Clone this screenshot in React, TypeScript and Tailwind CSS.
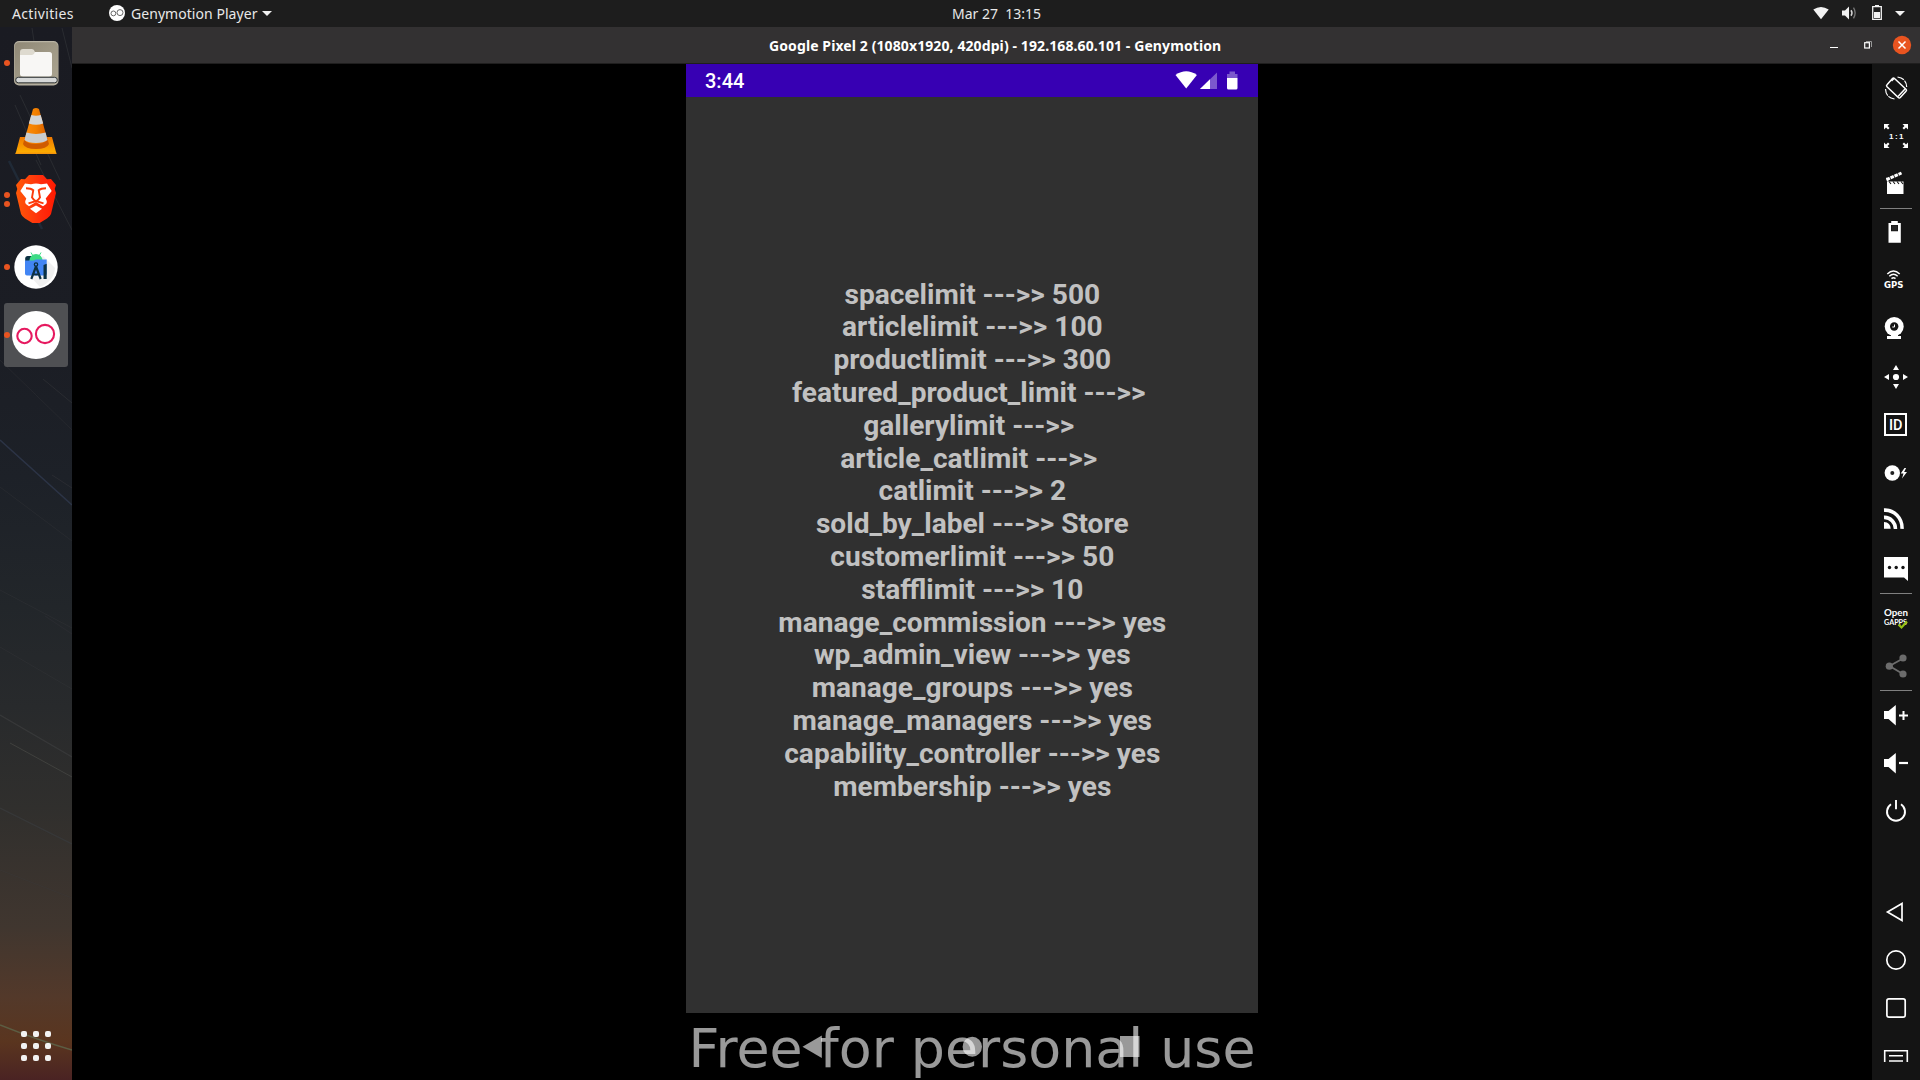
import React from 'react';

const limits: [string, string][] = [
  ['spacelimit', '500'],
  ['articlelimit', '100'],
  ['productlimit', '300'],
  ['featured_product_limit', ''],
  ['gallerylimit', ''],
  ['article_catlimit', ''],
  ['catlimit', '2'],
  ['sold_by_label', 'Store'],
  ['customerlimit', '50'],
  ['stafflimit', '10'],
  ['manage_commission', 'yes'],
  ['wp_admin_view', 'yes'],
  ['manage_groups', 'yes'],
  ['manage_managers', 'yes'],
  ['capability_controller', 'yes'],
  ['membership', 'yes'],
];

function TopBar() {
  return (
    <header className="flex h-[27px] shrink-0 items-center bg-[#1d1d1d] font-['Noto_Sans',sans-serif] text-[14px] leading-[27px] text-[#e8e8e8]">
      <span className="ml-3 w-[97px] tracking-[0.35px]">Activities</span>
      <svg className="h-[27px] w-[22px]" viewBox="109 0 22 27">
        <circle cx="117" cy="13" r="8" fill="#fff" />
        <circle cx="113.4" cy="13.4" r="2.4" fill="none" stroke="#444" strokeWidth="0.8" />
        <circle cx="120" cy="12.6" r="3" fill="none" stroke="#444" strokeWidth="0.8" />
      </svg>
      <span className="w-[131px] tracking-[0.05px]">Genymotion Player</span>
      <svg className="h-[27px] w-[10px]" viewBox="262 0 10 27">
        <path d="M262 11h10l-5 5z" fill="#f0f0f0" />
      </svg>
      <span className="ml-[680px] whitespace-pre tracking-[0px]">Mar 27  13:15</span>
      <svg className="ml-auto h-[27px] w-[120px]" viewBox="1800 0 120 27">
        <path d="M1813.3 9.6q7.7-5 15.4 0L1821 19.3z" fill="#f2f2f2" />
        <path d="M1842 10.5h3l4-4v13l-4-4h-3z" fill="#f2f2f2" />
        <path d="M1851 10.3q2 2.7 0 5.4" fill="none" stroke="#d5d5d5" strokeWidth="1.5" />
        <path d="M1853.5 7.7q3.3 5.3 0 10.6" fill="none" stroke="#777" strokeWidth="1.3" />
        <path d="M1872.7 6.7h8.6v12.6h-8.6z" fill="none" stroke="#f2f2f2" strokeWidth="1.3" />
        <path d="M1875 5h4v2h-4zM1874 12h6v6h-6z" fill="#f2f2f2" />
        <path d="M1895 11h10l-5 5z" fill="#f2f2f2" />
      </svg>
    </header>
  );
}

function TitleBar() {
  return (
    <div className="flex h-[37px] shrink-0 items-center border-b border-[#1f1e1e] bg-[#333132] text-white">
      <span className="ml-[697px] whitespace-nowrap pt-[2px] font-['Noto_Sans',sans-serif] text-[14px] font-bold leading-[34px] tracking-[0.1px]">
        Google Pixel 2 (1080x1920, 420dpi) - 192.168.60.101 - Genymotion
      </span>
      <svg className="ml-auto h-[36px] w-[100px]" viewBox="1820 27 100 36">
        <path d="M1830 47h8v1h-8z" fill="#fff" />
        <path d="M1866 41.5h5.5v5.5" fill="none" stroke="#999" strokeWidth="1" />
        <rect x="1864.7" y="42.7" width="4.7" height="5.3" fill="none" stroke="#fff" strokeWidth="1.2" />
        <circle cx="1902" cy="45" r="9.2" fill="#e95420" />
        <path d="M1898.5 41.5l7 7m0-7l-7 7" stroke="#fff" strokeWidth="1.5" />
      </svg>
    </div>
  );
}

function Slot({ children, dots = 0, active = false }: { children: React.ReactNode; dots?: number; active?: boolean }) {
  return (
    <div className="flex h-[68px] items-center">
      <div className={active ? 'ml-1 flex h-16 w-16 items-center rounded-[3px] bg-[#4f5053]' : 'ml-1 flex h-16 w-16 items-center'}>
        <div className="flex h-full w-[6px] flex-col items-center justify-center gap-[3px]">
          {Array.from({ length: dots }, (_, i) => (
            <span key={i} className="h-[6px] w-[6px] shrink-0 rounded-full bg-[#e95420]" />
          ))}
        </div>
        <svg className="ml-[2px] h-12 w-12" viewBox="0 0 48 48">
          {children}
        </svg>
      </div>
    </div>
  );
}

function Dock() {
  return (
    <aside className="relative flex w-[72px] shrink-0 flex-col bg-[linear-gradient(to_bottom,#1a1b22_0px,#1b1d24_300px,#1d2128_450px,#22262a_580px,#282a2c_680px,#302f2d_780px,#40362f_900px,#53392a_970px,#5a351f_1015px,#4a2323_1053px)]">
      <svg className="absolute inset-0 h-full w-full" viewBox="0 27 72 1053" fill="none">
        <path d="M0 440L72 505" stroke="#2c3446" strokeWidth="1.5" />
        <path d="M43 379L72 403M62 28l10 40M32 28l6 40M15 105l26 60M36 160l36 70M52 475l20 13M45 616l27 18M20 95l40 85" stroke="#2a2c31" />
        <path d="M0 715l72 42M0 808l72 36" stroke="#373839" strokeWidth="1.3" />
        <path d="M10 743L72 777" stroke="#40413e" />
        <path d="M9 161l11 22 22 46" stroke="#26384a" strokeWidth="2.5" opacity=".5" />
        <path d="M0 590l72 38M0 647l72 42M0 487l72 54M0 870l72 28M0 360l72 70" stroke="#3b3d3e" opacity=".3" />
        <path d="M0 1025q40 16 72 25" stroke="#5c5d43" strokeWidth="1.5" />
      </svg>
      <div className="relative flex flex-col pt-[2px]">
        <Slot dots={1}>
          <defs>
            <linearGradient id="fileBody" x1="0" y1="0" x2="1" y2="1">
              <stop offset="0" stopColor="#8f8876" />
              <stop offset=".5" stopColor="#9f9885" />
              <stop offset="1" stopColor="#aaa491" />
            </linearGradient>
          </defs>
          <rect x="2" y="2" width="44.5" height="44.5" rx="5" fill="#b9b4a4" />
          <rect x="2.5" y="3.2" width="43.5" height="42" rx="4.5" fill="url(#fileBody)" />
          <path d="M8 13q0-3 3-3h9q2 0 3 3h13q4 0 4 3v8H8z" fill="#dedacf" />
          <path d="M8 16h12q2 0 3-3h14q3 0 3 3v19q0 2.5-3 2.5H11q-3 0-3-2.500z" fill="#f8f7f5" />
          <rect x="3.7" y="38.3" width="41.6" height="5.5" rx="2.7" fill="#d6d8d8" stroke="#33383a" strokeWidth="1" />
        </Slot>
        <Slot>
          <defs>
            <linearGradient id="coneBase" x1="0" y1="0" x2="0" y2="1">
              <stop offset="0" stopColor="#f07800" />
              <stop offset="1" stopColor="#ffb400" />
            </linearGradient>
            <linearGradient id="coneBody">
              <stop offset="0" stopColor="#ff8b0a" />
              <stop offset=".5" stopColor="#f28000" />
              <stop offset="1" stopColor="#d85c00" />
            </linearGradient>
          </defs>
          <path d="M8 30h32l4.500 17h-41z" fill="url(#coneBase)" />
          <path d="M3.800 45.600h40.400v1.400H3.500z" fill="#f5960a" />
          <path d="M13 30h22l2 7q-2 5-13 5t-13-5z" fill="#cf5b00" />
          <path d="M21 2q3-2 6 0l8.500 31q-3 4-11.500 4T12.500 33z" fill="url(#coneBody)" />
          <path d="M19.300 8q4.700 1.500 9.400 0l2.500 8.500q-7 2.500-14.400 0z" fill="#d3d5d7" />
          <path d="M14.400 25.500q9.500 2.800 19.200 0L35.500 33q-3.500 3-11.500 3t-11.500-3z" fill="#c9cccf" />
        </Slot>
        <Slot dots={2}>
          <defs>
            <linearGradient id="lion">
              <stop offset="0" stopColor="#ff5a08" />
              <stop offset=".65" stopColor="#ff2b0c" />
              <stop offset="1" stopColor="#ff1a00" />
            </linearGradient>
          </defs>
          <path d="M17 0h14l4 4.300 4-.4 5 6-1.300 4 1.300 4-5 21q-1 2.500-4 4.500l-8 5q-3 1.500-6 0l-8-5q-3-2-4-4.500L4 18l1.300-4L4 10l5-6 4 .3z" fill="url(#lion)" />
          <path d="M13 8.500l6 .8q5-1.600 10 0l6-.8 4.700 7.500-6 7.500q2.300 4.500-.2 6l-2.500 1.800L24 27l-7 4.300-2.500-1.800q-2.500-1.500-.2-6L8.300 16z" fill="#fff" />
          <path d="M14 13.300q5 0 7.300 1.900l-1.300 7.500M34 13.300q-5 0-7.300 1.900l1.300 7.500" fill="none" stroke="#fb3a0b" strokeWidth="1.900" />
          <path d="M19.700 22q1.500 2.600 4.300 4.300 2.800-1.700 4.300-4.300M16.500 28.300L24 26l7.500 2.300" fill="none" stroke="#fb3a0b" strokeWidth="1.900" />
          <path d="M18 33.700l6-3.200 6 3.200-6 4.500z" fill="#fff" />
        </Slot>
        <Slot dots={1}>
          <circle cx="24" cy="24" r="21.7" fill="#fff" />
          <path d="M31 13l12 12q-1 13-15 19l-13-14z" fill="#f0f0f0" />
          <rect x="13.200" y="13" width="9" height="7" rx="2.500" fill="#0b3042" />
          <path d="M17.300 18a6.600 6.800 0 0 1 13.400 0z" fill="#3ddc84" />
          <path d="M19 9.500l2 3.500m8-3.500l-2 3.500" stroke="#3ddc84" />
          <path d="M13 17.500h9l1.500-1h11.200v14q0 2-2 2H15q-2 0-2-2z" fill="#4285f4" />
          <path d="M24 23.500l-4.700 12.500M24 23.500l4.700 12.500M20.500 30.500q3.500 2 7 0" fill="none" stroke="#0b3042" strokeWidth="2.200" />
          <circle cx="24" cy="21.500" r="1.700" fill="#4285f4" stroke="#0b3042" strokeWidth="1.200" />
          <path d="M31.500 22l3.200-1.300V36h-3.200z" fill="#0b3042" />
        </Slot>
        <Slot dots={1} active>
          <circle cx="24" cy="24" r="24" fill="#fff" />
          <circle cx="12.5" cy="25" r="7.2" fill="none" stroke="#e6195f" strokeWidth="2.100" />
          <circle cx="33" cy="23" r="9.1" fill="none" stroke="#e6195f" strokeWidth="2.100" />
        </Slot>
      </div>
      <div className="relative mb-[19px] ml-[21px] mt-auto grid w-[30px] grid-cols-3 gap-[6px]">
        {Array.from({ length: 9 }, (_, i) => (
          <span key={i} className="h-[6px] w-[6px] rounded-[2px] bg-[#f2f2f2]" />
        ))}
      </div>
    </aside>
  );
}

function Phone() {
  return (
    <main className="flex min-w-0 flex-1 justify-center bg-black">
      <div className="flex w-[572px] flex-col">
        <div className="flex h-[33px] shrink-0 items-center bg-[#3700b3]">
          <span className="ml-[19px] pt-[2px] font-[Roboto,sans-serif] text-[20px] font-medium leading-[33px] text-white">3:44</span>
          <svg className="ml-auto h-[33px] w-[100px]" viewBox="1158 64 100 33" fill="#fff">
            <path d="M1175.5 75q10.7-7.5 21.4 0l-10.7 13.500z" />
            <path d="M1217 72.500V89h-17z" fillOpacity=".35" />
            <path d="M1210 79.300v9.700h-10z" />
            <path d="M1227 74h2.500v-2.500h5.500V74h2.500v4H1227z" fillOpacity=".35" />
            <path d="M1227 78h10.500v10q0 1.500-1.500 1.500h-7.500q-1.500 0-1.500-1.500z" />
          </svg>
        </div>
        <div className="flex h-[916px] shrink-0 flex-col items-center bg-[#303030] pl-[0.6px] pt-[181.5px] font-[Roboto,sans-serif] text-[28.08px] font-bold leading-[32.82px] text-[#c1c1c1]">
          {limits.map(([name, value]) => (
            <div key={name} className="whitespace-pre">{`${name} --->> ${value}`}</div>
          ))}
        </div>
        <div className="relative flex h-[67px] justify-center overflow-hidden">
          <svg className="absolute inset-0 h-full w-full" viewBox="686 1013 572 67" fill="#fff" fillOpacity=".6">
            <path d="M802.5 1046.700L821.800 1035.500v22.500z" />
            <ellipse cx="972.3" cy="1046.7" rx="9.7" ry="10" />
            <rect x="1120" y="1036" width="19.5" height="21" />
          </svg>
          <span className="relative whitespace-nowrap pt-[1.5px] font-['DejaVu_Sans',sans-serif] text-[53.8px] leading-[67px] text-white/60">Free for personal use</span>
        </div>
      </div>
    </main>
  );
}

function Tool({ children }: { children: React.ReactNode }) {
  return (
    <svg className="h-12 w-12 shrink-0" viewBox="0 0 48 48" fill="#fff">
      {children}
    </svg>
  );
}

function Divider() {
  return <div className="ml-2 h-px w-8 shrink-0 bg-[#808080]" />;
}

function Toolbar() {
  return (
    <aside className="flex w-12 shrink-0 flex-col bg-[#141414]">
      <Tool>
        <path d="M20.500 14.500q1-1 2 0L34 25.200q1 1 0 2l-5.700 6.300q-1 1-2 0L15 22.700q-1-1 0-2z" fill="none" stroke="#fff" strokeWidth="1.500" />
        <path d="M26 32.500l7-7.500M19.500 17l2.500-2.500" stroke="#fff" strokeWidth="1.500" />
        <path d="M25.500 13Q34.500 14.500 34.700 23M13.500 25Q14 34 22.500 35" fill="none" stroke="#fff" strokeWidth="1.200" strokeDasharray="7 1" />
      </Tool>
      <Tool>
        <path d="M12 12h5.500l-2 2 2 2-1.500 1.500-2-2-2 2zM36 12h-5.500l2 2-2 2 1.500 1.500 2-2 2 2zM12 36h5.500l-2-2 2-2-1.500-1.500-2 2-2-2zM36 36h-5.500l2-2-2-2 1.500-1.500 2 2 2-2z" />
        <text x="17" y="26.900" fontSize="8" fontWeight="700" fontFamily="Liberation Sans" textLength="14.500">1 : 1</text>
      </Tool>
      <Tool>
        <path d="M15 21.500h16.500V34H15z" />
        <path d="M14.500 19.700L29.500 13" stroke="#fff" strokeWidth="3" strokeDasharray="3.600 .8" />
        <path d="M14 17l3 4.500h-2z" />
        <path d="M17 21.500l2 2.500M21 21.500l2 2.500M25 21.500l2 2.500M29 21.500l2 2.500" stroke="#141414" strokeWidth="1.100" />
      </Tool>
      <Divider />
      <Tool>
        <path d="M19.200 12h6.600v2h3v19.700H16.500V14h2.700zM19 16v6.300h7V16z" fillRule="evenodd" />
        <path d="M19.500 16.500h6v5h-6z" fill="#292929" />
      </Tool>
      <Tool>
        <path d="M15.300 17q6.200-6 12.400 0M17.300 19.300q4.200-4 8.400 0M19.500 21.600q2-1.700 4 0" fill="none" stroke="#fff" strokeWidth="1.500" />
        <text x="12" y="30.800" fontSize="8.500" fontWeight="700" fontFamily="DejaVu Sans" textLength="19.500" lengthAdjust="spacingAndGlyphs">GPS</text>
      </Tool>
      <Tool>
        <circle cx="22.200" cy="21.500" r="9.500" />
        <circle cx="22.200" cy="21.500" r="4.200" fill="#141414" />
        <path d="M22.500 19.500v2.500h-2.200" fill="none" stroke="#fff" />
        <path d="M19 29h7v2h3v3H15v-3h4z" />
      </Tool>
      <Tool>
        <circle cx="24" cy="24" r="3.100" />
        <path d="M24 12l3 5h-6zM24 36l3-5h-6zM12 24l5-3v6zM36 24l-5-3v6z" />
      </Tool>
      <Tool>
        <rect x="13" y="13" width="21" height="21" fill="none" stroke="#fff" strokeWidth="2" />
        <text x="23.700" y="28.900" textAnchor="middle" fontSize="14.500" fontWeight="500" fontFamily="Roboto">ID</text>
      </Tool>
      <Tool>
        <circle cx="20.300" cy="24" r="7.700" />
        <circle cx="20.300" cy="24" r="2" fill="#222" />
        <path d="M32.500 19l-3.800 5.500h2.800L30 29.500l5-6.500h-2.900l2-4z" />
      </Tool>
      <Tool>
        <path d="M12 13.900A17 17 0 0 1 30 31.800M12 20.900A11 11 0 0 1 23.500 31.800" transform="translate(0 -1.500) scale(1 1.050)" fill="none" stroke="#fff" strokeWidth="3.500" />
        <path d="M12 25q6.500.5 6.700 6.800H12z" />
      </Tool>
      <Tool>
        <path d="M12 12h24v24l-4-3.500H12z" />
        <circle cx="17.500" cy="22.500" r="1.700" fill="#141414" />
        <circle cx="24.200" cy="22.500" r="1.700" fill="#141414" />
        <circle cx="31" cy="22.500" r="1.700" fill="#141414" />
      </Tool>
      <Divider />
      <Tool>
        <text x="12" y="22.200" fontSize="9" fontWeight="700" fontFamily="Lato" textLength="24" lengthAdjust="spacingAndGlyphs">Open</text>
        <text x="12" y="30.500" fontSize="7.500" fontWeight="700" fontFamily="Lato" textLength="23" lengthAdjust="spacingAndGlyphs">GAPPS</text>
        <path d="M26.500 30.500l3 3 5.500-6" fill="none" stroke="#97c115" strokeWidth="2.200" />
      </Tool>
      <Tool>
        <path d="M31 16.500L17.500 24 31 32" fill="none" stroke="#6c6c6c" strokeWidth="1.800" />
        <circle cx="31" cy="16" r="3.600" fill="#6c6c6c" />
        <circle cx="17.300" cy="24.200" r="3.600" fill="#6c6c6c" />
        <circle cx="31" cy="32" r="3.600" fill="#6c6c6c" />
      </Tool>
      <Divider />
      <Tool>
        <path d="M12 20h4.500l7.300-6v20.500l-7.300-6.500H12z" />
        <path d="M27 24.500h9M31.500 20v9" stroke="#fff" strokeWidth="2" />
      </Tool>
      <Tool>
        <path d="M12 20h4.500l7.300-6v20.500l-7.300-6.500H12z" />
        <path d="M27 24h9" stroke="#fff" strokeWidth="2.200" />
      </Tool>
      <Tool>
        <path d="M19 17.200a9 9 0 1 0 10 0M24 13v9.300" fill="none" stroke="#fff" strokeWidth="1.900" />
      </Tool>
      <div className="h-[53px] shrink-0" />
      <Tool>
        <path d="M30 15.500v17L15.500 24z" fill="none" stroke="#fff" strokeWidth="1.700" />
      </Tool>
      <Tool>
        <circle cx="24" cy="24" r="9.200" fill="none" stroke="#fff" strokeWidth="1.700" />
      </Tool>
      <Tool>
        <rect x="14.900" y="14.900" width="18.300" height="18.300" rx="2" fill="none" stroke="#fff" strokeWidth="1.700" />
      </Tool>
      <Tool>
        <path d="M12.700 30V18.800h22.600V30M17 23.800h14M17 29h14" fill="none" stroke="#fff" strokeWidth="1.600" />
      </Tool>
    </aside>
  );
}

export default function App() {
  return (
    <div className="flex h-[1080px] w-[1920px] flex-col overflow-hidden bg-black">
      <TopBar />
      <div className="flex min-h-0 flex-1">
        <Dock />
        <div className="flex min-w-0 flex-1 flex-col">
          <TitleBar />
          <div className="flex min-h-0 flex-1">
            <Phone />
            <Toolbar />
          </div>
        </div>
      </div>
    </div>
  );
}
